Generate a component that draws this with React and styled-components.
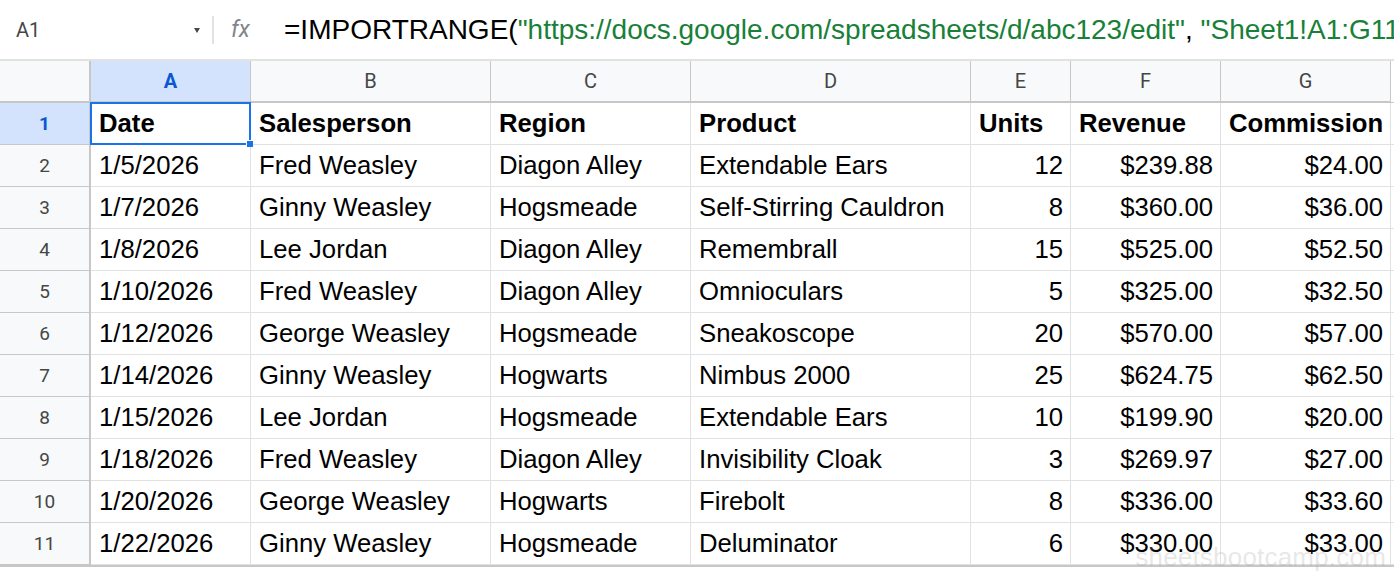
import React from "react";
import styled, { createGlobalStyle, css } from "styled-components";

const Global = createGlobalStyle`
  html, body { margin: 0; padding: 0; background: #ffffff; }
  body { font-family: "Liberation Sans", Arial, sans-serif; overflow: hidden; }
  * { box-sizing: border-box; }
`;

const COLS = [91, 160, 240, 200, 280, 100, 150, 170];

const Page = styled.div`
  width: 1394px;
  height: 572px;
  position: relative;
  overflow: hidden;
  background: #fff;
`;

const FormulaBar = styled.div`
  height: 61px;
  display: flex;
  align-items: center;
  border-bottom: 2px solid #e1e3e1;
  white-space: nowrap;
  overflow: hidden;
`;

const NameBox = styled.div`
  width: 212px;
  flex: 0 0 212px;
  display: flex;
  align-items: center;
  justify-content: space-between;
  padding: 0 12px 0 16px;
  font-family: Roboto, "Liberation Sans", sans-serif;
  font-size: 20px;
  color: #444746;
`;

const Caret = styled.span`
  width: 0;
  height: 0;
  border-left: 3.5px solid transparent;
  border-right: 3.5px solid transparent;
  border-top: 5px solid #444746;
  margin-top: 2px;
`;

const Divider = styled.div`
  width: 2px;
  height: 28px;
  background: #e1e3e1;
  flex: 0 0 2px;
`;

const Fx = styled.div`
  width: 70px;
  flex: 0 0 70px;
  padding-left: 17px;
  font-family: Roboto, "Liberation Sans", sans-serif;
  font-style: italic;
  font-size: 23px;
  color: #80868b;
`;

const Formula = styled.div`
  font-size: 28px;
  color: #000;
  white-space: nowrap;
`;

const Str = styled.span`
  color: #188038;
`;

const Grid = styled.div`
  display: grid;
  grid-template-columns: ${COLS.map((c) => c + "px").join(" ")} 1fr;
  border-bottom: 2px solid #c7c7c7;
`;

const HeadCell = styled.div`
  height: 42px;
  background: ${(p) => (p.$active ? "#d3e3fd" : "#f8f9fa")};
  border-right: 1px solid #c7c7c7;
  border-bottom: 2px solid #c7c7c7;
  display: flex;
  align-items: center;
  justify-content: center;
  font-family: Roboto, "Liberation Sans", sans-serif;
  font-size: 20px;
  color: ${(p) => (p.$active ? "#0b57d0" : "#444746")};
  font-weight: ${(p) => (p.$active ? 700 : 400)};
  ${(p) =>
    p.$corner &&
    css`
      border-right: 2px solid #c7c7c7;
    `}
`;

const RowHead = styled.div`
  height: 42px;
  background: ${(p) => (p.$active ? "#d3e3fd" : "#f8f9fa")};
  border-right: 2px solid #c7c7c7;
  border-bottom: 1px solid #c7c7c7;
  display: flex;
  align-items: center;
  justify-content: center;
  font-family: Roboto, "Liberation Sans", sans-serif;
  font-size: 19px;
  color: ${(p) => (p.$active ? "#0b57d0" : "#444746")};
  font-weight: ${(p) => (p.$active ? 700 : 400)};
`;

const Cell = styled.div`
  position: relative;
  height: 42px;
  border-right: 1px solid #e1e1e1;
  border-bottom: 1px solid #e1e1e1;
  display: flex;
  align-items: center;
  justify-content: ${(p) => (p.$right ? "flex-end" : "flex-start")};
  padding: 0 7px 0 8px;
  font-size: 25.7px;
  font-weight: ${(p) => (p.$bold ? 700 : 400)};
  color: #000;
  white-space: nowrap;
  overflow: visible;
  ${(p) =>
    p.$selected &&
    css`
      &::after {
        content: "";
        position: absolute;
        left: -1px;
        top: -1px;
        right: -1px;
        bottom: -1px;
        border: 2px solid #1a73e8;
        pointer-events: none;
      }
      &::before {
        content: "";
        position: absolute;
        right: -3px;
        bottom: -3px;
        width: 6px;
        height: 6px;
        background: #1a73e8;
        border-left: 1px solid #fff;
        border-top: 1px solid #fff;
        z-index: 2;
      }
    `}
`;

const Filler = styled.div`
  height: 42px;
  border-bottom: 1px solid ${(p) => (p.$head ? "#c7c7c7" : "#e1e1e1")};
  background: #fff;
`;

const Watermark = styled.div`
  position: absolute;
  right: 8px;
  bottom: -1px;
  font-size: 26px;
  color: rgba(160, 160, 160, 0.26);
  pointer-events: none;
  letter-spacing: 0.2px;
`;

const headers = ["A", "B", "C", "D", "E", "F", "G"];
const titles = ["Date", "Salesperson", "Region", "Product", "Units", "Revenue", "Commission"];
const rows = [
  ["1/5/2026", "Fred Weasley", "Diagon Alley", "Extendable Ears", "12", "$239.88", "$24.00"],
  ["1/7/2026", "Ginny Weasley", "Hogsmeade", "Self-Stirring Cauldron", "8", "$360.00", "$36.00"],
  ["1/8/2026", "Lee Jordan", "Diagon Alley", "Remembrall", "15", "$525.00", "$52.50"],
  ["1/10/2026", "Fred Weasley", "Diagon Alley", "Omniocular", "5", "$325.00", "$32.50"],
  ["1/12/2026", "George Weasley", "Hogsmeade", "Sneakoscope", "20", "$570.00", "$57.00"],
  ["1/14/2026", "Ginny Weasley", "Hogwarts", "Nimbus 2000", "25", "$624.75", "$62.50"],
  ["1/15/2026", "Lee Jordan", "Hogsmeade", "Extendable Ears", "10", "$199.90", "$20.00"],
  ["1/18/2026", "Fred Weasley", "Diagon Alley", "Invisibility Cloak", "3", "$269.97", "$27.00"],
  ["1/20/2026", "George Weasley", "Hogwarts", "Firebolt", "8", "$336.00", "$33.60"],
  ["1/22/2026", "Ginny Weasley", "Hogsmeade", "Deluminator", "6", "$330.00", "$33.00"],
];
rows[3][3] = "Omniocculars".replace("occ", "oc");

export default function App() {
  return (
    <Page>
      <Global />
      <FormulaBar>
        <NameBox>
          <span>A1</span>
          <Caret />
        </NameBox>
        <Divider />
        <Fx>fx</Fx>
        <Formula>
          =IMPORTRANGE(<Str>"https://docs.google.com/spreadsheets/d/abc123/edit"</Str>,{" "}
          <Str>"Sheet1!A1:G11"</Str>)
        </Formula>
      </FormulaBar>
      <Grid>
        <HeadCell $corner />
        {headers.map((h, i) => (
          <HeadCell key={h} $active={i === 0}>
            {h}
          </HeadCell>
        ))}
        <Filler $head />

        <RowHead $active>1</RowHead>
        {titles.map((t, i) => (
          <Cell key={t} $bold $selected={i === 0}>
            {t}
          </Cell>
        ))}
        <Filler />

        {rows.map((r, ri) => (
          <React.Fragment key={ri}>
            <RowHead>{ri + 2}</RowHead>
            {r.map((v, ci) => (
              <Cell key={ci} $right={ci >= 4}>
                {v}
              </Cell>
            ))}
            <Filler />
          </React.Fragment>
        ))}
      </Grid>
      <Watermark>sheetsbootcamp.com</Watermark>
    </Page>
  );
}
